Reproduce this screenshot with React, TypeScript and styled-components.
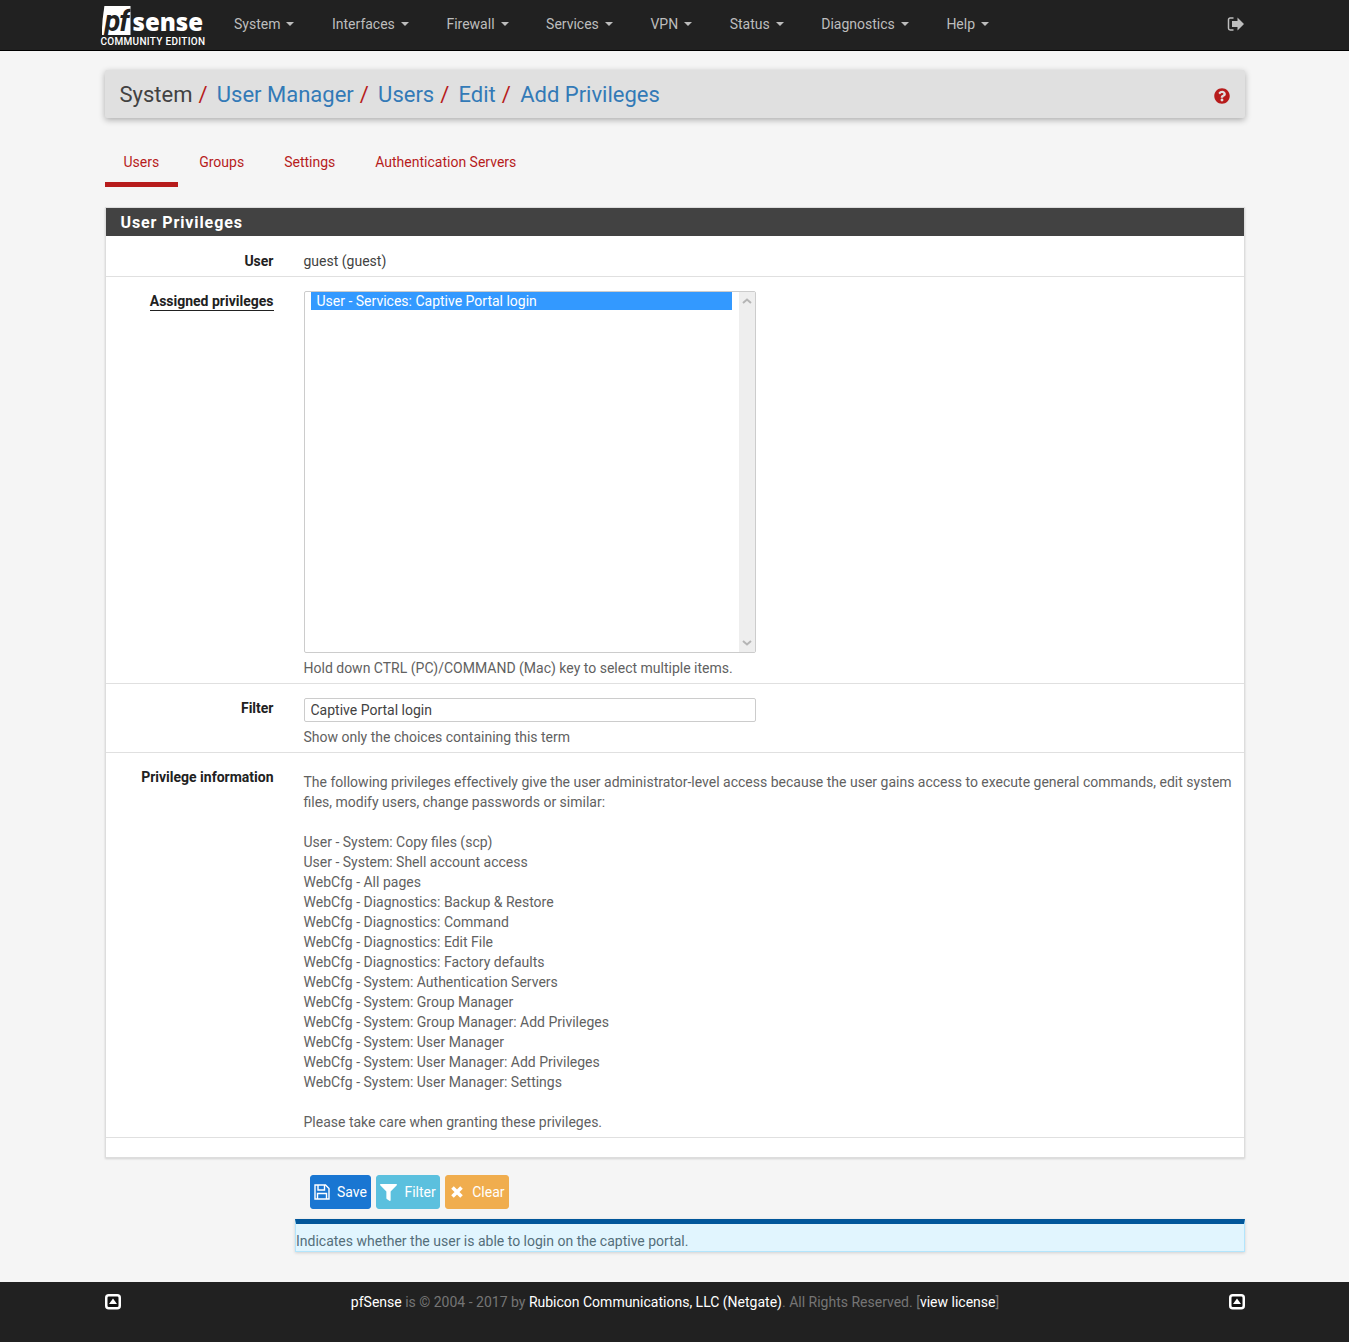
import React from "react";
import styled, { createGlobalStyle } from "styled-components";
import { FaQuestionCircle, FaFilter } from "react-icons/fa";

const navItems = ["System", "Interfaces", "Firewall", "Services", "VPN", "Status", "Diagnostics", "Help"];
const tabs = ["Users", "Groups", "Settings", "Authentication Servers"];
const crumbs = ["User Manager", "Users", "Edit", "Add Privileges"];
const privileges = [
  "User - System: Copy files (scp)",
  "User - System: Shell account access",
  "WebCfg - All pages",
  "WebCfg - Diagnostics: Backup & Restore",
  "WebCfg - Diagnostics: Command",
  "WebCfg - Diagnostics: Edit File",
  "WebCfg - Diagnostics: Factory defaults",
  "WebCfg - System: Authentication Servers",
  "WebCfg - System: Group Manager",
  "WebCfg - System: Group Manager: Add Privileges",
  "WebCfg - System: User Manager",
  "WebCfg - System: User Manager: Add Privileges",
  "WebCfg - System: User Manager: Settings",
];

function TopIcon() {
  return (
    <FooterIcon viewBox="0 0 16 16" width="16" height="16">
      <rect x="1.25" y="1.25" width="13.5" height="13" rx="2.5" fill="#111" stroke="#fff" strokeWidth="2.5" />
      <path d="M8 4.500l4 5.500H4z" fill="#fff" />
    </FooterIcon>
  );
}

function App() {
  return (
    <>
      <Global />
      <Navbar>
        <NavInner>
          <Logo>
            <LogoTop>
              <PfBox>pf</PfBox>
              <Sense>sense</Sense>
            </LogoTop>
            <Edition>COMMUNITY EDITION</Edition>
          </Logo>
          <NavList>
            {navItems.map((item) => (
              <li key={item}>
                {item}
                <Caret />
              </li>
            ))}
          </NavList>
          <Logout viewBox="0 0 18 16" width="18" height="16">
            <path d="M6.5 2H3.2C2.2 2 1.5 2.7 1.5 3.7v8.6c0 1 .7 1.7 1.7 1.700h3.300" fill="none" stroke="currentColor" strokeWidth="1.5" />
            <path d="M10.500 1.500 17 8l-6.500 6.500V11H5V5h5.500z" fill="currentColor" />
          </Logout>
        </NavInner>
      </Navbar>

      <Main>
        <Breadcrumb>
          <Crumbs>
            <span>System</span>
            <Slash>/</Slash>
            {crumbs.map((c, i) => (
              <React.Fragment key={c}>
                <Crumb>{c}</Crumb>
                {i < crumbs.length - 1 && <Slash>/</Slash>}
              </React.Fragment>
            ))}
          </Crumbs>
          <HelpIcon size={16} color="#b71c1c" />
        </Breadcrumb>

        <Tabs>
          {tabs.map((t, i) => (
            <Tab key={t} $active={i === 0}>
              {t}
            </Tab>
          ))}
        </Tabs>

        <Panel>
          <PanelHeading>User Privileges</PanelHeading>
          <Row>
            <Label>User</Label>
            <Value>guest (guest)</Value>
          </Row>
          <Row>
            <Label>
              <Underlined>Assigned privileges</Underlined>
            </Label>
            <div>
              <ListBox>
                <Options>
                  <Option>User - Services: Captive Portal login</Option>
                </Options>
                <Scrollbar>
                  <svg width="10" height="6" viewBox="0 0 10 6">
                    <path d="M1 5l4-3.500L9 5" fill="none" stroke="#b5b5b5" strokeWidth="2" />
                  </svg>
                  <svg width="10" height="6" viewBox="0 0 10 6">
                    <path d="M1 1l4 3.500L9 1" fill="none" stroke="#b5b5b5" strokeWidth="2" />
                  </svg>
                </Scrollbar>
              </ListBox>
              <Help>Hold down CTRL (PC)/COMMAND (Mac) key to select multiple items.</Help>
            </div>
          </Row>
          <Row>
            <Label>Filter</Label>
            <div>
              <FilterInput type="text" defaultValue="Captive Portal login" />
              <Help>Show only the choices containing this term</Help>
            </div>
          </Row>
          <Row>
            <Label>Privilege information</Label>
            <Info>
              The following privileges effectively give the user administrator-level access because the user gains
              access to execute general commands, edit system files, modify users, change passwords or similar:
              <br />
              <br />
              {privileges.map((p) => (
                <div key={p}>{p}</div>
              ))}
              <br />
              Please take care when granting these privileges.
            </Info>
          </Row>
        </Panel>

        <Buttons>
          <Button $bg="#1976d2" $gap={7}>
            <svg viewBox="0 0 16 16" width="16" height="16" fill="none" stroke="#fff" strokeWidth="1.400">
              <path d="M1 1h10.500L15 4.500V15H1z" />
              <path d="M4 1v5h6.500V1M3.500 15V9.500h9V15" />
            </svg>
            Save
          </Button>
          <Button $bg="#5bc0de" $gap={7.5}>
            <FaFilter size={17} />
            Filter
          </Button>
          <Button $bg="#f0ad4e" $gap={7.5}>
            <svg viewBox="0 0 16 16" width="16" height="16">
              <path d="M3.500 3.500l9 9M12.500 3.500l-9 9" stroke="#fff" strokeWidth="3.600" />
            </svg>
            Clear
          </Button>
        </Buttons>

        <InfoBox>Indicates whether the user is able to login on the captive portal.</InfoBox>
      </Main>

      <Footer>
        <TopIcon />
        <FooterText>
          <b>pfSense</b> is © 2004 - 2017 by <b>Rubicon Communications, LLC (Netgate)</b>. All Rights Reserved. [
          <b>view license</b>]
        </FooterText>
        <TopIcon />
      </Footer>
    </>
  );
}

const Global = createGlobalStyle`
  * {
    box-sizing: border-box;
  }
  body {
    margin: 0;
    background: #f5f5f5;
    color: #424242;
    font-family: Roboto, "Liberation Sans", sans-serif;
    font-size: 14px;
    line-height: 20px;
  }
`;

const Navbar = styled.nav`
  height: 51px;
  background: #212121;
  border-bottom: 1px solid #000;
`;
const NavInner = styled.div`
  width: 1140px;
  margin: 0 auto;
  height: 49px;
  display: flex;
  align-items: center;
`;
const Logo = styled.div`
  width: 124px;
  height: 49px;
  display: flex;
  flex-direction: column;
  margin-left: -5px;
  flex: none;
`;
const LogoTop = styled.div`
  display: flex;
  height: 32px;
  padding: 6px 0 0 2px;
`;
const PfBox = styled.span`
  width: 29px;
  height: 29px;
  background: #fff;
  clip-path: polygon(10% 0, 100% 0, 100% 100%, 0 100%, 4% 45%);
  color: #212121;
  font-size: 29px;
  line-height: 30px;
  font-weight: 700;
  font-style: italic;
  letter-spacing: -1px;
  padding-left: 3px;
`;
const Sense = styled.span`
  color: #fff;
  font-size: 24px;
  line-height: 31px;
  font-weight: 800;
  font-family: "Open Sans", Roboto, sans-serif;
  margin-left: 2px;
`;
const Edition = styled.span`
  color: #fff;
  font-size: 10px;
  line-height: 10px;
  margin-top: 5px;
  font-weight: 500;
  letter-spacing: 0.3px;
  white-space: nowrap;
  padding-left: 1px;
`;
const NavList = styled.ul`
  display: flex;
  list-style: none;
  gap: 37.55px;
  margin: 0;
  padding: 0 0 1px 10.5px;
  flex: 1;
  color: #bdbdbd;
  & > li {
    display: flex;
    align-items: center;
  }
`;
const Caret = styled.i`
  width: 0;
  height: 0;
  margin-left: 6px;
  border-top: 4px solid #bdbdbd;
  border-left: 4px solid transparent;
  border-right: 4px solid transparent;
`;
const Logout = styled.svg`
  color: #bdbdbd;
  margin-top: -2px;
`;

const Main = styled.main`
  width: 1140px;
  margin: 0 auto;
  padding-top: 19px;
`;
const Breadcrumb = styled.div`
  height: 48px;
  background: #e0e0e0;
  border-radius: 2px;
  box-shadow: 0 2px 6px rgba(0, 0, 0, 0.3);
  padding: 0 15px;
  display: flex;
  align-items: center;
  justify-content: space-between;
`;
const Crumbs = styled.div`
  font-size: 22px;
  line-height: 48px;
  margin-top: 2px;
  color: #424242;
  display: flex;
`;
const HelpIcon = styled(FaQuestionCircle)`
  margin-top: 3px;
`;
const Slash = styled.span`
  color: #b71c1c;
  margin: 0 9.250px 0 6px;
`;
const Crumb = styled.span`
  color: #337ab7;
`;
const Tabs = styled.ul`
  display: flex;
  list-style: none;
  gap: 2px;
  margin: 22px 0 20px;
  padding: 0;
`;
const Tab = styled.li<{ $active?: boolean }>`
  height: 47px;
  padding: 12px 19px 0;
  color: #b71c1c;
  border-bottom: 5px solid ${(p) => (p.$active ? "#b71c1c" : "transparent")};
`;
const Panel = styled.section`
  background: #fff;
  border: 1px solid #ddd;
  box-shadow: 0 1px 2px rgba(0, 0, 0, 0.15);
  padding-bottom: 19px;
`;
const PanelHeading = styled.h2`
  margin: 0 0 1px;
  height: 28px;
  background: #424242;
  color: #fff;
  font-size: 16px;
  line-height: 30px;
  font-weight: 700;
  letter-spacing: 0.9px;
  padding-left: 15px;
`;
const Row = styled.div`
  display: grid;
  grid-template-columns: 168px 1fr;
  column-gap: 30px;
  padding: 14px 5px 5px 0;
  border-bottom: 1px solid #e0e0e0;
`;
const Label = styled.div`
  text-align: right;
  font-weight: 700;
  color: #212121;
`;
const Underlined = styled.span`
  border-bottom: 1px solid #212121;
  padding-bottom: 1px;
`;
const Value = styled.div``;
const ListBox = styled.div`
  width: 452px;
  height: 362px;
  border: 1px solid #ccc;
  border-radius: 2px;
  display: flex;
  padding: 0;
`;
const Options = styled.div`
  flex: 1;
  padding: 0 7px 0 6px;
`;
const Option = styled.div`
  height: 18px;
  line-height: 18px;
  background: #3399ff;
  color: #fff;
  padding-left: 6px;
`;
const Scrollbar = styled.div`
  width: 16px;
  background: #eee;
  display: flex;
  flex-direction: column;
  justify-content: space-between;
  align-items: center;
  padding: 6px 0;
`;
const Help = styled.div`
  margin-top: 5px;
  color: #616161;
`;
const FilterInput = styled.input`
  display: block;
  width: 452px;
  height: 24px;
  border: 1px solid #ccc;
  border-radius: 2px;
  padding: 0 6px;
  font: inherit;
  color: #424242;
  background: #fff;
`;
const Info = styled.div`
  padding-top: 5px;
  color: #616161;
`;
const Buttons = styled.div`
  display: flex;
  gap: 5px;
  margin: 17px 0 10px;
  padding-left: 205.500px;
`;
const Button = styled.button<{ $bg: string; $gap: number }>`
  height: 34px;
  display: flex;
  align-items: center;
  gap: ${(p) => p.$gap}px;
  background: ${(p) => p.$bg};
  border: 1px solid ${(p) => p.$bg};
  border-radius: 3px;
  color: #fff;
  font: inherit;
  padding: 0 3px;
  & > svg {
    flex: none;
  }
`;
const InfoBox = styled.div`
  margin-left: 190.500px;
  height: 33px;
  background: #e1f5fe;
  border: 1px solid #b3e5fc;
  border-top: 5px solid #01579b;
  color: #546e7a;
  line-height: 35px;
  box-shadow: 0 1px 3px rgba(0, 0, 0, 0.15);
`;
const Footer = styled.footer`
  margin-top: 30px;
  height: 60px;
  background: #212121;
  color: #757575;
  padding: 10px 104px 0 105px;
  display: flex;
  justify-content: space-between;
`;
const FooterIcon = styled.svg`
  margin-top: 2px;
`;
const FooterText = styled.div`
  & > b {
    color: #fff;
    font-weight: 400;
  }
`;

export default App;
